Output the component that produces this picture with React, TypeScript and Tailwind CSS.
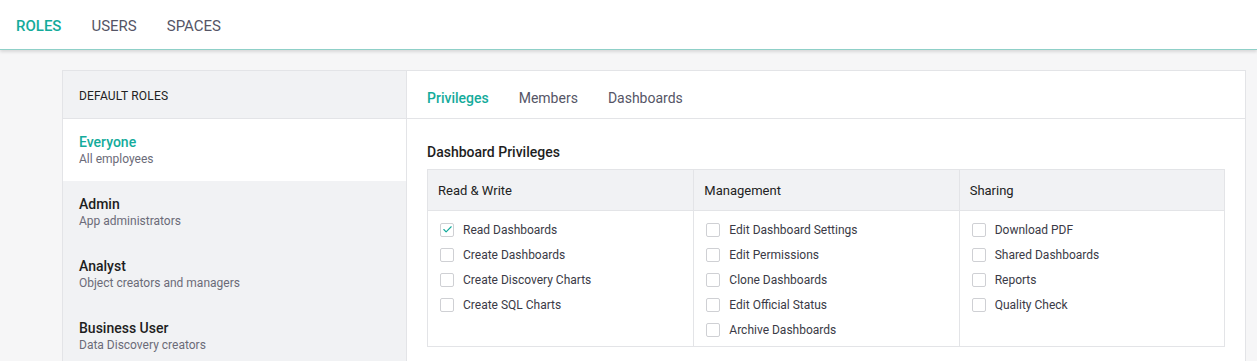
import { Check } from 'lucide-react';

const roles = [
  { name: 'Everyone', desc: 'All employees', active: true },
  { name: 'Admin', desc: 'App administrators' },
  { name: 'Analyst', desc: 'Object creators and managers' },
  { name: 'Business User', desc: 'Data Discovery creators' },
];

const columns = [
  {
    title: 'Read & Write',
    items: [
      { label: 'Read Dashboards', checked: true },
      { label: 'Create Dashboards' },
      { label: 'Create Discovery Charts' },
      { label: 'Create SQL Charts' },
    ],
  },
  {
    title: 'Management',
    items: [
      { label: 'Edit Dashboard Settings' },
      { label: 'Edit Permissions' },
      { label: 'Clone Dashboards' },
      { label: 'Edit Official Status' },
      { label: 'Archive Dashboards' },
    ],
  },
  {
    title: 'Sharing',
    items: [
      { label: 'Download PDF' },
      { label: 'Shared Dashboards' },
      { label: 'Reports' },
      { label: 'Quality Check' },
    ],
  },
];

function Checkbox({ checked }: { checked?: boolean }) {
  return (
    <span className="w-[14px] h-[14px] border border-[#cfd0d4] rounded-[2px] bg-white flex items-center justify-center shrink-0">
      {checked && <Check className="w-[11px] h-[11px] text-[#14ab9b]" strokeWidth={2.5} />}
    </span>
  );
}

export default function App() {
  return (
    <div className="h-[361px] overflow-hidden bg-[#f6f6f7] font-['Roboto',sans-serif]">
      {/* Top nav */}
      <div className="h-[50px] bg-white border-b border-[#8fd0c8] shadow-[0_2px_3px_rgba(0,0,0,0.12)] flex items-center gap-[30px] pl-4 pt-[3px] relative z-10">
        <span className="text-[15px] font-medium text-[#14ab9b]">ROLES</span>
        <span className="text-[15px] text-[#555566]">USERS</span>
        <span className="text-[15px] text-[#555566]">SPACES</span>
      </div>

      <div className="pt-5 pl-[62px] pr-[11px]">
        <div className="flex border border-[#e3e4e7] bg-white h-[400px]">
          {/* Sidebar */}
          <div className="w-[344px] bg-[#f1f2f4] border-r border-[#e3e4e7] shrink-0">
            <div className="h-[48px] border-b border-[#e3e4e7] flex items-center pl-4 pt-[2px] text-[12px] text-[#222] tracking-[0.2px]">
              DEFAULT ROLES
            </div>
            {roles.map((r) => (
              <div key={r.name} className={`h-[62px] pl-4 pt-[14px] ${r.active ? 'bg-white' : ''}`}>
                <div className={`text-[14px] font-medium leading-[18px] ${r.active ? 'text-[#14ab9b]' : 'text-[#1e1e1e]'}`}>
                  {r.name}
                </div>
                <div className="text-[12px] leading-[16px] text-[#6b6b78]">{r.desc}</div>
              </div>
            ))}
          </div>

          {/* Main */}
          <div className="flex-1 min-w-0">
            <div className="h-[48px] border-b border-[#e3e4e7] flex items-center gap-[30px] pl-5 pt-[7px]">
              <span className="text-[14px] font-medium text-[#14ab9b]">Privileges</span>
              <span className="text-[14px] text-[#555566]">Members</span>
              <span className="text-[14px] text-[#555566]">Dashboards</span>
            </div>
            <div className="px-5 pt-[23px]">
              <div className="text-[14px] font-medium leading-[20px] text-[#1e1e1e] mb-[7px]">Dashboard Privileges</div>
              <div className="grid grid-cols-3 border border-[#e3e4e7]">
                {columns.map((c, i) => (
                  <div key={c.title} className={`flex flex-col ${i > 0 ? 'border-l border-[#e3e4e7]' : ''}`}>
                    <div className="h-[41px] bg-[#f1f2f4] border-b border-[#e3e4e7] flex items-center pl-[10px] pt-[1px] text-[13px] text-[#222]">
                      {c.title}
                    </div>
                    <div className="pt-[6px] pb-[4px] pl-3">
                      {c.items.map((it) => (
                        <div key={it.label} className="h-[25px] flex items-center gap-[9px]">
                          <Checkbox checked={it.checked} />
                          <span className="text-[12px] text-[#3a3a46]">{it.label}</span>
                        </div>
                      ))}
                    </div>
                  </div>
                ))}
              </div>
            </div>
          </div>
        </div>
      </div>
    </div>
  );
}
